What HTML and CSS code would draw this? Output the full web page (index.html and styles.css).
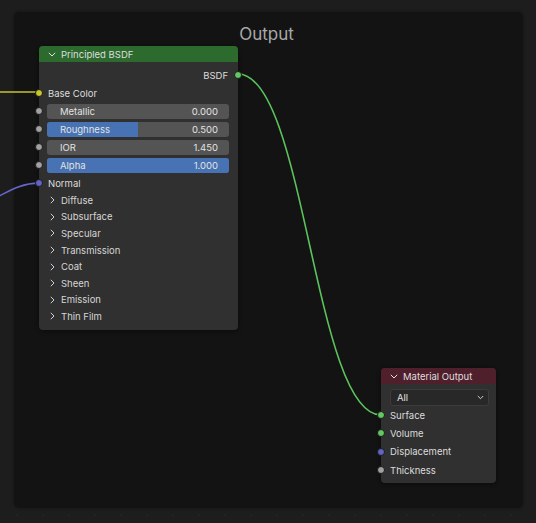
FILE: index.html
```html
<!DOCTYPE html>
<html>
<head>
<meta charset="utf-8">
<link rel="stylesheet" href="styles.css">
</head>
<body>
<div class="canvas">
  <div class="frame"><div class="frame-label">Output</div></div>
  <svg class="wires" width="536" height="523" viewBox="0 0 536 523">
    <path d="M0 92 L39 92" stroke="#c4c42a" stroke-width="1.6" fill="none"/>
    <path d="M-30 205 C -5 205, 10 183, 39 183" stroke="#6666cc" stroke-width="1.6" fill="none"/>
    <path d="M238 74 C 305 74, 314 415, 381 415" stroke="#5cc35c" stroke-width="1.6" fill="none"/>
  </svg>

  <div class="node bsdf">
    <div class="node-header hdr-green">
      <svg class="chev" width="8" height="5" viewBox="0 0 8 5"><path d="M0.8 0.8 L4 4 L7.2 0.8" stroke="#e0e0e0" stroke-width="1" fill="none"/></svg>
      <span>Principled BSDF</span>
    </div>
    <div class="node-body">
      <div class="row row-out">BSDF<span class="socket sock-right s-green"></span></div>
      <div class="row">Base Color<span class="socket sock-left s-yellow"></span></div>
      <div class="row row-slider"><span class="socket sock-left s-gray"></span>
        <div class="slider"><span class="label">Metallic</span><span class="value">0.000</span></div></div>
      <div class="row row-slider"><span class="socket sock-left s-gray"></span>
        <div class="slider"><div class="fill" style="width:50%"></div><span class="label">Roughness</span><span class="value">0.500</span></div></div>
      <div class="row row-slider"><span class="socket sock-left s-gray"></span>
        <div class="slider"><span class="label">IOR</span><span class="value">1.450</span></div></div>
      <div class="row row-slider"><span class="socket sock-left s-gray"></span>
        <div class="slider"><div class="fill" style="width:100%"></div><span class="label">Alpha</span><span class="value">1.000</span></div></div>
      <div class="row">Normal<span class="socket sock-left s-purple"></span></div>
      <div class="panels">
        <div class="panel"><svg class="arrow" width="5" height="8" viewBox="0 0 5 8"><path d="M0.8 0.8 L4 4 L0.8 7.2" stroke="#cfcfcf" stroke-width="1" fill="none"/></svg>Diffuse</div>
        <div class="panel"><svg class="arrow" width="5" height="8" viewBox="0 0 5 8"><path d="M0.8 0.8 L4 4 L0.8 7.2" stroke="#cfcfcf" stroke-width="1" fill="none"/></svg>Subsurface</div>
        <div class="panel"><svg class="arrow" width="5" height="8" viewBox="0 0 5 8"><path d="M0.8 0.8 L4 4 L0.8 7.2" stroke="#cfcfcf" stroke-width="1" fill="none"/></svg>Specular</div>
        <div class="panel"><svg class="arrow" width="5" height="8" viewBox="0 0 5 8"><path d="M0.8 0.8 L4 4 L0.8 7.2" stroke="#cfcfcf" stroke-width="1" fill="none"/></svg>Transmission</div>
        <div class="panel"><svg class="arrow" width="5" height="8" viewBox="0 0 5 8"><path d="M0.8 0.8 L4 4 L0.8 7.2" stroke="#cfcfcf" stroke-width="1" fill="none"/></svg>Coat</div>
        <div class="panel"><svg class="arrow" width="5" height="8" viewBox="0 0 5 8"><path d="M0.8 0.8 L4 4 L0.8 7.2" stroke="#cfcfcf" stroke-width="1" fill="none"/></svg>Sheen</div>
        <div class="panel"><svg class="arrow" width="5" height="8" viewBox="0 0 5 8"><path d="M0.8 0.8 L4 4 L0.8 7.2" stroke="#cfcfcf" stroke-width="1" fill="none"/></svg>Emission</div>
        <div class="panel"><svg class="arrow" width="5" height="8" viewBox="0 0 5 8"><path d="M0.8 0.8 L4 4 L0.8 7.2" stroke="#cfcfcf" stroke-width="1" fill="none"/></svg>Thin Film</div>
      </div>
    </div>
  </div>

  <div class="node matout">
    <div class="node-header hdr-red">
      <svg class="chev" width="8" height="5" viewBox="0 0 8 5"><path d="M0.8 0.8 L4 4 L7.2 0.8" stroke="#e0e0e0" stroke-width="1" fill="none"/></svg>
      <span>Material Output</span>
    </div>
    <div class="node-body mo-body">
      <div class="dropdown"><span>All</span>
        <svg width="7" height="5" viewBox="0 0 7 5"><path d="M0.8 1 L3.5 3.7 L6.2 1" stroke="#d0d0d0" stroke-width="1" fill="none"/></svg>
      </div>
      <div class="row mo-row">Surface<span class="socket sock-left s-green"></span></div>
      <div class="row mo-row">Volume<span class="socket sock-left s-green"></span></div>
      <div class="row mo-row">Displacement<span class="socket sock-left s-purple"></span></div>
      <div class="row mo-row">Thickness<span class="socket sock-left s-gray"></span></div>
    </div>
  </div>
</div>
</body>
</html>
```
FILE: styles.css
```css
* { box-sizing: border-box; }
html, body { margin: 0; padding: 0; }
body {
  background: #1d1d1d;
  font-family: Inter, "Noto Sans", "DejaVu Sans", sans-serif;
  font-size: 9.5px;
  color: #dcdcdc;
}
.canvas {
  position: relative;
  width: 536px;
  height: 523px;
  overflow: hidden;
  background-color: #1d1d1d;
  background-image: radial-gradient(circle, #222222 0.7px, transparent 1px);
  background-size: 26px 26px;
  background-position: 4px 8px;
}
.frame {
  position: absolute;
  left: 14px;
  top: 12px;
  width: 509px;
  height: 496px;
  background: #131313;
  border-radius: 5px;
  box-shadow: 0 0 3px rgba(0,0,0,0.35);
}
.frame-label {
  text-align: center;
  font-size: 17px;
  color: #a9a9a9;
  padding-top: 12px;
  line-height: 20px;
  padding-right: 4px;
}
.wires {
  position: absolute;
  left: 0;
  top: 0;
}
.node {
  position: absolute;
  background: #303030;
  border-radius: 4px;
  box-shadow: 0 1px 4px rgba(0,0,0,0.45);
}
.bsdf { left: 39px; top: 46px; width: 199px; height: 284px; }
.matout { left: 381px; top: 368px; width: 115px; height: 115px; }
.node-header {
  height: 16px;
  border-radius: 4px 4px 0 0;
  display: flex;
  align-items: center;
  padding-left: 9px;
  gap: 5px;
  color: #dedede;
}
.hdr-green { background: #2c6a2e; }
.hdr-red { background: #4f1f2c; }
.chev { display: block; }
.node-body { padding-top: 4px; }
.row {
  position: relative;
  height: 18px;
  display: flex;
  align-items: center;
  padding-left: 9px;
  padding-right: 9px;
}
.row-out { justify-content: flex-end; padding-right: 10px; }
.row-slider { padding-left: 8px; padding-right: 9px; }
.socket {
  position: absolute;
  top: 50%;
  width: 8px;
  height: 8px;
  margin-top: -4px;
  border-radius: 50%;
  border: 1px solid #1a1a1a;
}
.sock-left { left: -4px; }
.sock-right { right: -4px; }
.s-green { background: #63c763; }
.s-yellow { background: #c7c729; }
.s-gray { background: #a1a1a1; }
.s-purple { background: #6363c7; }
.slider {
  position: relative;
  flex: 1;
  height: 15px;
  background: #545454;
  border-radius: 3px;
  display: flex;
  align-items: center;
  justify-content: space-between;
  padding: 0 11px 0 13px;
  overflow: hidden;
}
.slider .fill {
  position: absolute;
  left: 0;
  top: 0;
  bottom: 0;
  background: #4772b3;
}
.slider .label, .slider .value { position: relative; color: #e2e2e2; }
.panels { display: flex; flex-direction: column; }
.panel {
  height: 16.6px;
  display: flex;
  align-items: center;
  padding-left: 11px;
  gap: 6px;
  color: #d6d6d6;
}
.arrow { display: block; }
.mo-body { padding-top: 5px; }
.dropdown {
  margin: 0 7px 0 9px;
  height: 17px;
  background: #282828;
  border: 1px solid #3c3c3c;
  border-radius: 3px;
  display: flex;
  align-items: center;
  justify-content: space-between;
  padding: 0 4px 0 6px;
  color: #e0e0e0;
}
.mo-row { height: 18.3px; }
```
